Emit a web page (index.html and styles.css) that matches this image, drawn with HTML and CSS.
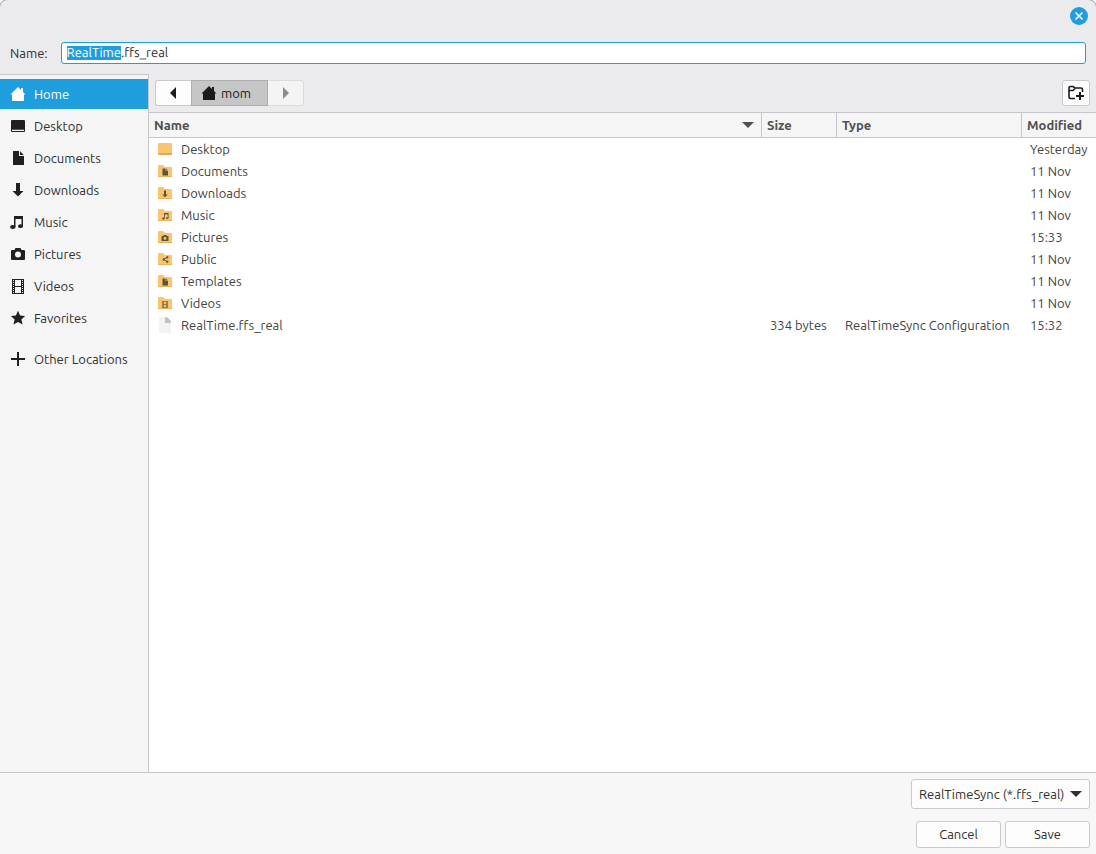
FILE: index.html
```html
<!DOCTYPE html>
<html lang="en">
<head>
<meta charset="utf-8">
<title>Save File</title>
<link rel="stylesheet" href="styles.css">
</head>
<body>
<svg class="sprite" aria-hidden="true">
  <symbol id="i-home" viewBox="0 0 16 16"><path d="M8 1 .5 8.500H2V15h12V8.500h1.500L13 6V2h-2v2Z"/></symbol>
  <symbol id="i-desktop" viewBox="0 0 16 16"><path d="M2 2h12a1 1 0 0 1 1 1v10a1 1 0 0 1-1 1H2a1 1 0 0 1-1-1V3a1 1 0 0 1 1-1Zm0 9.800v1.200h12v-1.200Z" fill-rule="evenodd"/></symbol>
  <symbol id="i-doc" viewBox="0 0 16 16"><path d="M3 1h6v5h5v9H3ZM10 1.200 13.800 5H10Z"/></symbol>
  <symbol id="i-down" viewBox="0 0 16 16"><path d="M6 1h4v8h3.500L8 14.500 2.500 9H6Z"/></symbol>
  <symbol id="i-music" viewBox="0 0 16 16"><path d="M4 2h9v10h-1.500V5h-6v8H4Z"/><ellipse cx="2.800" cy="13" rx="2.700" ry="1.900"/><ellipse cx="10.500" cy="12.200" rx="2.500" ry="1.900"/></symbol>
  <symbol id="i-camera" viewBox="0 0 16 16"><path d="M5.500 2h5L11.500 4H14a1 1 0 0 1 1 1v8a1 1 0 0 1-1 1H2a1 1 0 0 1-1-1V5a1 1 0 0 1 1-1h2.500ZM8 5.500a3 3 0 1 0 0 6 3 3 0 0 0 0-6Z" fill-rule="evenodd"/></symbol>
  <symbol id="i-film" viewBox="0 0 16 16"><path d="M2 1h12v15H2ZM5 2v6h6V2Zm0 7v6h6V9ZM3 2v1h1V2Zm0 2v1h1V4Zm0 2v1h1V6Zm0 2v1h1V8Zm0 2v1h1v-1Zm0 2v1h1v-1Zm0 2v1h1v-1Zm9-12v1h1V2Zm0 2v1h1V4Zm0 2v1h1V6Zm0 2v1h1V8Zm0 2v1h1v-1Zm0 2v1h1v-1Zm0 2v1h1v-1Z" fill-rule="evenodd"/></symbol>
  <symbol id="i-star" viewBox="0 0 16 16"><path d="m8 .8 2.100 4.700 5 .5-3.700 3.400 1.200 5L8 12l-4.600 2.400 1.200-5L.9 6l5-.5Z"/></symbol>
  <symbol id="i-plus" viewBox="0 0 16 16"><path d="M7 1h2v6h6v2H9v6H7V9H1V7h6Z"/></symbol>
  <symbol id="i-share" viewBox="0 0 16 16"><path d="M12 3 4 8l8 5" fill="none" stroke="currentColor" stroke-width="2"/><circle cx="12" cy="3" r="2.700"/><circle cx="4" cy="8" r="2.700"/><circle cx="12" cy="13" r="2.700"/></symbol>
  <symbol id="i-folder" viewBox="0 0 16 16"><path d="M1 3a1 1 0 0 1 1-1h4l2 2h6a1 1 0 0 1 1 1v9H1Z" fill="#f9c56f"/><path d="M1 13h14a1 1 0 0 1-1 1H2a1 1 0 0 1-1-1Z" fill="#eab158"/></symbol>
</svg>
<form class="dialog">
  <header class="titlebar">
    <button type="button" class="close" aria-label="Close"><svg viewBox="0 0 18 18"><path d="m5.500 5.500 7 7m0-7-7 7"/></svg></button>
  </header>
  <div class="name-row">
    <label for="filename">Name:</label>
    <input id="filename" class="filename" type="text" value="RealTime.ffs_real" spellcheck="false" autocomplete="off" autofocus>
  </div>
  <div class="body">
    <nav class="places" aria-label="Places">
      <a href="#home" class="place active"><svg class="icon"><use href="#i-home"/></svg>Home</a>
      <a href="#desktop" class="place"><svg class="icon"><use href="#i-desktop"/></svg>Desktop</a>
      <a href="#documents" class="place"><svg class="icon"><use href="#i-doc"/></svg>Documents</a>
      <a href="#downloads" class="place"><svg class="icon"><use href="#i-down"/></svg>Downloads</a>
      <a href="#music" class="place"><svg class="icon"><use href="#i-music"/></svg>Music</a>
      <a href="#pictures" class="place"><svg class="icon"><use href="#i-camera"/></svg>Pictures</a>
      <a href="#videos" class="place"><svg class="icon"><use href="#i-film"/></svg>Videos</a>
      <a href="#favorites" class="place"><svg class="icon"><use href="#i-star"/></svg>Favorites</a>
      <a href="#other" class="place other"><svg class="icon"><use href="#i-plus"/></svg>Other Locations</a>
    </nav>
    <main class="browser">
      <div class="pathbar">
        <div class="crumbs">
          <button type="button" class="crumb step" aria-label="Back"><svg class="icon" viewBox="0 0 16 16"><path d="M10 2v12L4 8Z"/></svg></button>
          <button type="button" class="crumb current"><svg class="icon"><use href="#i-home"/></svg>mom</button>
          <button type="button" class="crumb step" aria-label="Forward" disabled><svg class="icon" viewBox="0 0 16 16"><path d="M5 2v12l6-6Z"/></svg></button>
        </div>
        <button type="button" class="new-folder" aria-label="Create Folder"><svg class="icon" viewBox="0 0 16 16"><path d="M7 13.500H2.500A1.500 1.500 0 0 1 1 12V3a1.500 1.500 0 0 1 1.500-1.500H5L7 3h6a1.500 1.500 0 0 1 1.500 1.500V7M1 5.500h4L7 3.500" fill="none" stroke="currentColor" stroke-width="1.600"/><path d="M11 7h2v3h3v2h-3v3h-2v-3H8v-2h3Z"/></svg></button>
      </div>
      <div class="list">
        <table class="files">
          <colgroup><col><col class="col-size"><col class="col-type"><col class="col-modified"></colgroup>
          <thead>
            <tr><th aria-sort="ascending"><span class="sorted">Name<svg class="sort" viewBox="0 0 12 6"><path d="M0 0h12L6 6Z"/></svg></span></th><th>Size</th><th>Type</th><th>Modified</th></tr>
          </thead>
          <tbody>
            <tr><td><span class="file"><svg class="icon" viewBox="0 0 16 16"><path d="M1 3a1 1 0 0 1 1-1h12a1 1 0 0 1 1 1v10a1 1 0 0 1-1 1H2a1 1 0 0 1-1-1Z" fill="#f9c56f"/><path d="M1 12h14v1a1 1 0 0 1-1 1H2a1 1 0 0 1-1-1Z" fill="#e2a955"/></svg>Desktop</span></td><td></td><td></td><td>Yesterday</td></tr>
            <tr><td><span class="file"><svg class="icon" viewBox="0 0 16 16"><use href="#i-folder"/><use href="#i-doc" x="4" y="5" width="8" height="8"/></svg>Documents</span></td><td></td><td></td><td>11 Nov</td></tr>
            <tr><td><span class="file"><svg class="icon" viewBox="0 0 16 16"><use href="#i-folder"/><use href="#i-down" x="4" y="5" width="8" height="8"/></svg>Downloads</span></td><td></td><td></td><td>11 Nov</td></tr>
            <tr><td><span class="file"><svg class="icon" viewBox="0 0 16 16"><use href="#i-folder"/><use href="#i-music" x="5" y="5" width="8" height="8"/></svg>Music</span></td><td></td><td></td><td>11 Nov</td></tr>
            <tr><td><span class="file"><svg class="icon" viewBox="0 0 16 16"><use href="#i-folder"/><use href="#i-camera" x="4" y="5" width="8" height="8"/></svg>Pictures</span></td><td></td><td></td><td>15:33</td></tr>
            <tr><td><span class="file"><svg class="icon" viewBox="0 0 16 16"><use href="#i-folder"/><use href="#i-share" x="5" y="5" width="7" height="7"/></svg>Public</span></td><td></td><td></td><td>11 Nov</td></tr>
            <tr><td><span class="file"><svg class="icon" viewBox="0 0 16 16"><use href="#i-folder"/><use href="#i-doc" x="4" y="5" width="8" height="8"/></svg>Templates</span></td><td></td><td></td><td>11 Nov</td></tr>
            <tr><td><span class="file"><svg class="icon" viewBox="0 0 16 16"><use href="#i-folder"/><path d="M5 6h6v7H5Zm2 1v2h2V7Zm0 3v2h2v-2Z" fill="#9b7f48" fill-rule="evenodd"/></svg>Videos</span></td><td></td><td></td><td>11 Nov</td></tr>
            <tr><td><span class="file"><svg class="icon" viewBox="0 0 16 16"><path d="M3 0h5l6 6v9a1 1 0 0 1-1 1H3a1 1 0 0 1-1-1V1a1 1 0 0 1 1-1Z" fill="#f3f3f2"/><path d="M8 0c3 0 6 3 6 6H9a1 1 0 0 1-1-1Z" fill="#c1c1c1"/></svg>RealTime.ffs_real</span></td><td>334 bytes</td><td>RealTimeSync Configuration</td><td>15:32</td></tr>
          </tbody>
        </table>
      </div>
    </main>
  </div>
  <footer class="footer">
    <div class="filter">
      <select aria-label="File type"><option>RealTimeSync (*.ffs_real)</option></select>
      <svg class="sort" viewBox="0 0 12 6" aria-hidden="true"><path d="M0 0h12L6 6Z"/></svg>
    </div>
    <div class="actions">
      <button type="button" class="action">Cancel</button>
      <button type="submit" class="action">Save</button>
    </div>
  </footer>
</form>
<script src="script.js"></script>
</body>
</html>
```
FILE: styles.css
```css
* { box-sizing: border-box; }

body {
  margin: 0;
  background: #fff;
  color: #303030;
  font: 13px/20px Ubuntu, "Noto Sans", sans-serif;
}

button, input, select { font: inherit; color: inherit; margin: 0; }

.sprite { display: none; }
.icon { width: 16px; height: 16px; flex: none; fill: currentColor; }
.sort { width: 12px; height: 6px; flex: none; fill: currentColor; }

.dialog {
  display: flex;
  flex-direction: column;
  min-height: 100vh;
  background: #ebebed;
  border-radius: 8px 8px 0 0;
  box-shadow: 0 0 0 1px #a8a8a8;
}

.titlebar {
  display: flex;
  justify-content: flex-end;
  padding: 7px 8px 17px;
}

.close {
  width: 18px;
  height: 18px;
  padding: 0;
  border: 0;
  border-radius: 50%;
  background: #1f9ede;
}

.close svg { display: block; fill: none; stroke: #fff; stroke-width: 1.5px; }

.name-row {
  display: flex;
  align-items: center;
  gap: 13px;
  padding: 0 10px 10px;
}

.filename {
  flex: 1;
  min-width: 0;
  height: 22px;
  padding: 0 5px;
  border: 1px solid #1f9ede;
  border-radius: 3px;
  outline: 0;
  background: #fff;
  line-height: 20px;
  text-rendering: geometricPrecision;
  caret-color: transparent;
}

.filename::selection { background: #1f9ede; color: #fff; }

.body { display: flex; flex: 1; }

.places {
  display: flex;
  flex-direction: column;
  flex: none;
  gap: 2px;
  width: 149px;
  padding-top: 4px;
  border: solid #c6c6cc;
  border-width: 1px 1px 0 0;
  background: #f5f5f5;
}

.place {
  display: flex;
  align-items: center;
  gap: 8px;
  height: 30px;
  padding: 0 10px;
  color: #303030;
  text-decoration: none;
  white-space: nowrap;
}

.place .icon { color: #202020; }
.place.active, .place.active .icon { color: #fff; }
.place.active { background: #1f9ede; }
.place.other { margin-top: 9px; }

.browser { display: flex; flex-direction: column; flex: 1; min-width: 0; }

.pathbar {
  display: flex;
  justify-content: space-between;
  padding: 6px;
}

.crumbs { display: flex; }

.crumb, .new-folder {
  display: flex;
  align-items: center;
  justify-content: center;
  gap: 4px;
  height: 26px;
  padding: 0 9px;
  border: 1px solid #c9c9ce;
  background: #fdfdfd;
  color: #1c1c1c;
}

.crumb.step { width: 36px; }
.crumb:first-child { border-right: 0; border-radius: 3px 0 0 3px; }
.crumb:last-child { border-left: 0; border-radius: 0 3px 3px 0; }
.crumb.current { justify-content: flex-start; width: 77px; border-color: #adadb2; background: #c6c6c6; }
.crumb:disabled { background: #f4f4f4; border-color: #dcdce0; color: #8c8c8c; }
.new-folder { width: 28px; padding: 0; border-radius: 3px; }

.list { flex: 1; background: #fff; }

.files {
  width: 100%;
  table-layout: fixed;
  border-collapse: separate;
  border-spacing: 0;
}

.col-size { width: 75px; }
.col-type { width: 185px; }
.col-modified { width: 74px; }

.files th {
  height: 26px;
  padding: 0 5px;
  border: solid #c6c6cc;
  border-width: 1px 1px 1px 0;
  background: #f5f5f5;
  color: #505050;
  text-align: left;
}

.files th:last-child { border-right: 0; }
.sorted { display: flex; align-items: center; justify-content: space-between; padding-right: 2px; }

.files td {
  height: 22px;
  padding: 0 0 0 8px;
  color: #424242;
  line-height: 22px;
  white-space: nowrap;
}

.file { display: flex; align-items: center; gap: 8px; }
.file .icon { color: #5c533f; }

.footer {
  display: flex;
  flex-direction: column;
  align-items: flex-end;
  gap: 12px;
  padding: 6px;
  border-top: 1px solid #c6c6cc;
  background: #f7f7f7;
}

.filter { position: relative; width: 179px; }

.filter select {
  display: block;
  appearance: none;
  width: 100%;
  height: 30px;
  padding: 0 22px 0 7px;
  border: 1px solid #c9c9ce;
  border-radius: 3px;
  background: #fdfdfd;
}

.filter .sort { position: absolute; top: 12px; right: 8px; pointer-events: none; }

.actions { display: flex; gap: 4px; }

.action {
  width: 85px;
  height: 27px;
  padding: 0 0 1px;
  border: 1px solid #c9c9ce;
  border-radius: 3px;
  background: #fdfdfd;
}
```
FILE: script.js
```js
// Select the base name, leaving the extension alone.
const field = document.getElementById("filename");
field.focus();
field.setSelectionRange(0, field.value.lastIndexOf("."));
```
